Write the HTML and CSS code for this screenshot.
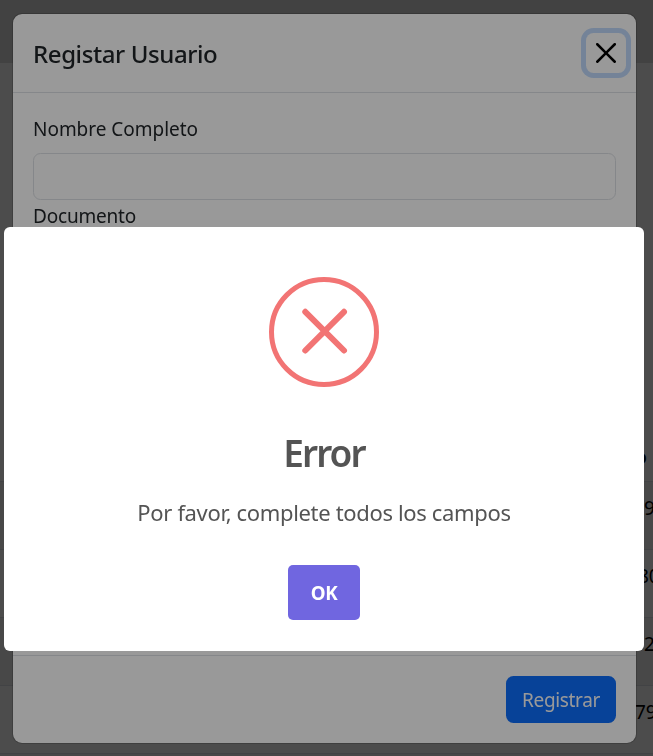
FILE: index.html
```html
<!DOCTYPE html>
<html lang="es">
<head>
<meta charset="utf-8">
<title>Registrar Usuario</title>
<link rel="stylesheet" href="styles.css">
</head>
<body>
<main class="page">
  <div class="topbar"></div>
  <div class="table">
    <div class="row head"><span class="head-text">o</span></div>
    <div class="row striped"><span>9</span></div>
    <div class="row"><span class="c2">80</span></div>
    <div class="row striped"><span>2</span></div>
    <div class="row"><span class="c4">79</span></div>
    <div class="row striped"></div>
  </div>
</main>
<div class="backdrop"></div>
<section class="modal">
  <header class="modal-header">
    <h5 class="modal-title">Registar Usuario</h5>
    <button class="close" aria-label="Cerrar"><svg viewBox="0 0 16 16" width="20" height="20"><path d="M.293.293a1 1 0 0 1 1.414 0L8 6.586 14.293.293a1 1 0 1 1 1.414 1.414L9.414 8l6.293 6.293a1 1 0 0 1-1.414 1.414L8 9.414l-6.293 6.293a1 1 0 0 1-1.414-1.414L6.586 8 .293 1.707a1 1 0 0 1 0-1.414z"/></svg></button>
  </header>
  <div class="modal-body">
    <label class="label name" for="nombre">Nombre Completo</label>
    <input class="input" id="nombre">
    <label class="label doc">Documento</label>
  </div>
  <footer class="modal-footer"><button class="submit"><span>Registrar</span></button></footer>
</section>
<div class="alert-layer">
  <section class="alert" role="alertdialog">
    <svg class="alert-icon" width="110" height="110" viewBox="0 0 110 110"><circle cx="55" cy="55" r="52.5"/><path d="M36.3 34.8 75 73.5M75 34.8 36.3 73.5"/></svg>
    <h2 class="alert-title">Error</h2>
    <p class="alert-text">Por favor, complete todos los campos</p>
    <button class="ok"><span>OK</span></button>
  </section>
</div>
</body>
</html>
```
FILE: styles.css
```css
* { box-sizing: border-box; }
body {
  margin: 0;
  height: 756px;
  overflow: hidden;
  background: #fff;
  color: #212529;
  font: 400 19px/30px "Noto Sans", "Open Sans", sans-serif;
}
button { border: 0; padding: 0; font: inherit; }
.page { height: 756px; overflow: hidden; color: #000; }
.topbar { height: 63px; background: #dcdcdc; }
.table { padding-top: 351px; }
.row {
  height: 68px;
  padding: 11px 0 0 644px;
  border-bottom: 1px solid #dee2e6;
  white-space: nowrap;
}
.striped { background: #f2f2f2; }
.head { padding: 28px 0 0 635px; font-weight: 700; }
.c2 { margin-left: -6px; }
.c4 { margin-left: -9px; }
.backdrop { position: fixed; inset: 0; background: rgba(0, 0, 0, .5); }
.modal {
  position: fixed;
  left: 12px;
  top: 13px;
  width: 625px;
  height: 731px;
  display: flex;
  flex-direction: column;
  background: #fff;
  background-clip: padding-box;
  border: 1px solid rgba(0, 0, 0, .175);
  border-radius: 10px;
}
.modal-header {
  display: flex;
  align-items: flex-start;
  justify-content: space-between;
  height: 79px;
  padding: 19px 10px 0 20px;
  border-bottom: 1px solid #dee2e6;
}
.modal-title { margin: 0; padding-top: 6px; font-size: 24px; font-weight: 500; letter-spacing: -.4px; }
.close {
  display: grid;
  place-items: center;
  width: 40px;
  height: 40px;
  border-radius: 7.5px;
  background: none;
  box-shadow: 0 0 0 5px rgba(13, 110, 253, .25);
}
.modal-body { flex: 1; padding: 21px 20px; }
.label { display: block; }
.name { margin-bottom: 9px; letter-spacing: -.03px; }
.doc { padding-top: 1px; letter-spacing: -.2px; }
.input {
  display: block;
  width: 100%;
  height: 47px;
  border: 1px solid #dee2e6;
  border-radius: 7.5px;
  background: #fff;
}
.modal-footer {
  display: flex;
  justify-content: flex-end;
  height: 88px;
  padding: 20px;
  border-top: 1px solid #dee2e6;
}
.submit {
  width: 110px;
  height: 47px;
  border-radius: 7.5px;
  background: #0d6efd;
  color: #fff;
  letter-spacing: -.35px;
}
.alert-layer {
  position: fixed;
  inset: 0;
  display: flex;
  padding: 227px 0 0 4px;
  background: rgba(0, 0, 0, .4);
}
.alert {
  display: flex;
  flex-direction: column;
  align-items: center;
  width: 640px;
  height: 424px;
  padding-top: 50px;
  border-radius: 6px;
  background: #fff;
  color: #545454;
}
.alert-icon { fill: none; stroke: #f27474; stroke-width: 5; stroke-linecap: round; }
.alert-icon path { stroke-width: 6; }
.alert-title {
  margin: 44px 0 0;
  font-size: 37px;
  line-height: 44px;
  font-weight: 600;
  letter-spacing: -1.9px;
}
.alert-text { margin: 20px 0 0; font-size: 22px; line-height: 34px; letter-spacing: -.34px; }
.ok {
  width: 72px;
  height: 55px;
  margin-top: 36px;
  border-radius: 5px;
  background: #7066e0;
  color: #fff;
  font-size: 18.75px;
  font-weight: 700;
  letter-spacing: -.4px;
}
```
